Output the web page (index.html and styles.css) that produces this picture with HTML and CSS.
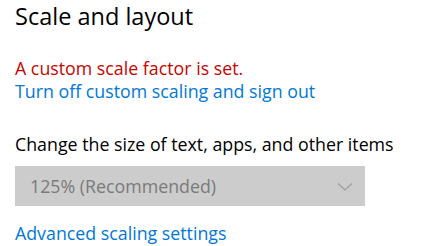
FILE: index.html
```html
<!DOCTYPE html>
<html>
<head>
<meta charset="utf-8">
<link rel="stylesheet" href="styles.css">
</head>
<body>
<div class="page">
  <h1 class="title">Scale and layout</h1>
  <div class="notice">
    <p class="warn">A custom scale factor is set.</p>
    <a class="link" href="#">Turn off custom scaling and sign out</a>
  </div>
  <p class="label">Change the size of text, apps, and other items</p>
  <div class="select">
    <span class="select-text">125% (Recommended)</span>
    <svg class="chev" width="16" height="9" viewBox="0 0 16 9"><path d="M1 1.5 L8 8 L15 1.5" fill="none" stroke="#9a9a9a" stroke-width="1.1"/></svg>
  </div>
  <a class="link adv" href="#">Advanced scaling settings</a>
</div>
</body>
</html>
```
FILE: styles.css
```css
html, body {
  margin: 0;
  padding: 0;
  background: #ffffff;
}
.page {
  display: flex;
  flex-direction: column;
  align-items: flex-start;
  padding: 1px 0 0 15px;
  font-family: "Open Sans", "Noto Sans", sans-serif;
  font-size: 17.8px;
  line-height: 23px;
  color: #000;
}
.title {
  margin: 0;
  font-size: 23.5px;
  line-height: 30px;
  font-weight: 400;
  color: #000;
}
.notice {
  display: flex;
  flex-direction: column;
  margin-top: 26px;
}
.warn {
  margin: 0;
  color: #c50500;
}
.link {
  color: #0078d7;
  text-decoration: none;
}
.label {
  margin: 30px 0 0 0;
}
.select {
  margin-top: 10px;
  width: 350px;
  height: 40px;
  box-sizing: border-box;
  background: #cccccc;
  display: flex;
  align-items: center;
  justify-content: space-between;
  padding: 0 12px 0 15px;
  line-height: 40px;
}
.select-text {
  color: #7a7a7a;
}
.chev {
  display: block;
}
.adv {
  margin-top: 16px;
}
```
